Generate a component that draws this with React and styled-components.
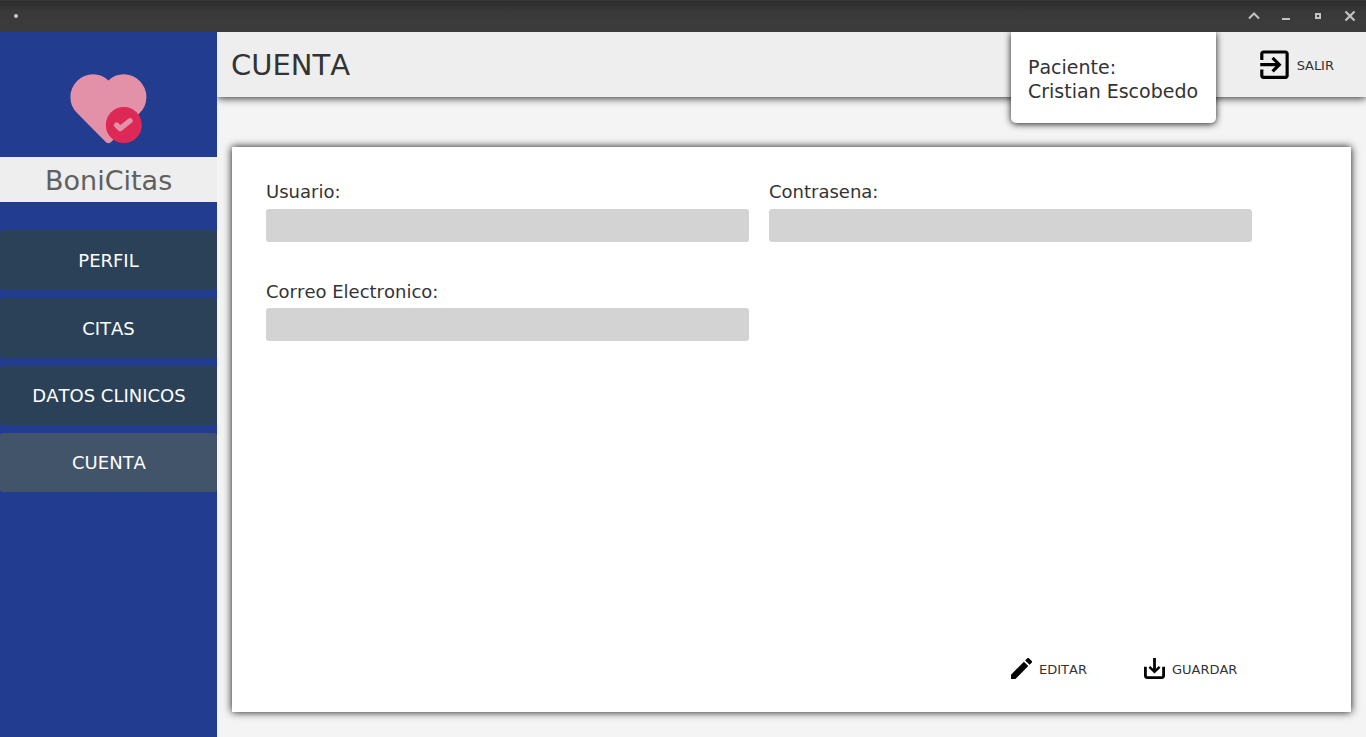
import React from "react";
import styled, { createGlobalStyle } from "styled-components";

const GlobalStyle = createGlobalStyle`
  *, *::before, *::after { box-sizing: border-box; }
  body {
    margin: 0;
    overflow: hidden;
    font-family: "DejaVu Sans", sans-serif;
    color: #333;
    background: #f4f4f4;
  }
  body, button { font-kerning: none; }
`;

const Window = styled.div`
  display: flex;
  flex-direction: column;
  height: 737px;
`;

const TitleBar = styled.div`
  display: flex;
  align-items: center;
  justify-content: space-between;
  flex: none;
  height: 32px;
  padding: 0 10px 0 14px;
  background: linear-gradient(#3f3f3f 0, #2e2e2e 1px, #2e2e2e 3px, #383838 11px, #3b3b3b 20px, #3b3b3b);
  position: relative;
  z-index: 5;
`;

const Dot = styled.span`
  width: 4px;
  height: 4px;
  border-radius: 50%;
  background: #c8c8c8;
`;

const Controls = styled.div`
  display: flex;
  gap: 20px;
  svg { display: block; }
`;

const Body = styled.div`
  display: flex;
  flex: 1;
  min-height: 0;
`;

const Sidebar = styled.aside`
  flex: none;
  width: 217px;
  background: #223c8f;
`;

const LogoArea = styled.div`
  height: 125px;
  padding: 37px 0 0 65px;
  svg { display: block; }
`;

const Brand = styled.div`
  height: 45px;
  padding-left: 45px;
  background: #eee;
  color: #606060;
  font-size: 27px;
  line-height: 47px;
`;

const Nav = styled.nav`
  display: flex;
  flex-direction: column;
  gap: 8px;
  padding-top: 28px;
`;

const NavButton = styled.button`
  height: ${(p) => (p.$compact ? 59 : 60)}px;
  padding: ${(p) => (p.$compact ? "0 0 1px 1px" : "1px 0 0")};
  border: 0;
  border-radius: 3px;
  background: ${(p) => (p.$active ? "#425469" : "#2b4157")};
  color: #fff;
  font-family: "DejaVu Sans", sans-serif;
  font-size: 18px;
`;

const Main = styled.main`
  flex: 1;
  display: flex;
  flex-direction: column;
  min-width: 0;
`;

const Header = styled.header`
  position: relative;
  display: flex;
  align-items: center;
  justify-content: space-between;
  flex: none;
  height: 65px;
  padding: 0 32px 0 14px;
  background: #eee;
  box-shadow: 0 1px 8px rgba(0, 0, 0, 0.85);
  clip-path: inset(0 0 -40px 0);
`;

const Title = styled.h1`
  margin: 0;
  font-size: 29px;
  font-weight: 400;
  line-height: 34px;
`;

const Patient = styled.div`
  position: absolute;
  top: 0;
  right: 150px;
  width: 205px;
  height: 91px;
  padding: 23px 0 0 17px;
  background: #fff;
  border-radius: 0 0 5px 5px;
  box-shadow: 0 1px 7px rgba(0, 0, 0, 0.9);
  font-size: 19px;
  line-height: 24px;
  white-space: nowrap;
`;

const Action = styled.button`
  display: flex;
  align-items: center;
  gap: ${(p) => p.$gap}px;
  padding: 0;
  border: 0;
  background: none;
  color: #333;
  font-family: "DejaVu Sans", sans-serif;
  font-size: 13px;
  svg { display: block; flex: none; }
`;

const ActionLabel = styled.span`
  padding-top: 2px;
`;

const Card = styled.section`
  flex: 1;
  display: flex;
  flex-direction: column;
  justify-content: space-between;
  margin: 50px 15px 25px;
  padding: 34px 99px 33px 34px;
  background: #fff;
  box-shadow: 0 0 8px rgba(0, 0, 0, 0.95);
`;

const Fields = styled.div`
  display: grid;
  grid-template-columns: 483px 483px;
  column-gap: 20px;
  row-gap: 39px;
`;

const Field = styled.label`
  display: block;
  font-size: 18px;
  line-height: 21px;
`;

const Input = styled.input`
  display: block;
  width: 100%;
  height: 33px;
  margin-top: ${(p) => p.$space}px;
  border: 0;
  border-radius: 3px;
  background: #d3d3d3;
`;

const Actions = styled.div`
  display: flex;
  justify-content: flex-end;
  gap: 57px;
  padding-right: 14.6px;
`;

const HeartLogo = () => (
  <svg width="90" height="80" viewBox="65 69 90 80">
    <path d="M77.05 113.05A22.7 22.7 0 0 1 70.4 97A22.7 22.7 0 0 1 93.1 74.3A22.7 22.7 0 0 1 108.4 80.4A22.7 22.7 0 0 1 123.7 74.3A22.7 22.7 0 0 1 146.4 97A22.7 22.7 0 0 1 139.75 113.05L110.8 142.3Q108.4 144.3 106 142.3Z" fill="#e391a9" />
    <circle cx="123.8" cy="125" r="18" fill="#de2855" />
    <circle cx="123.8" cy="125" r="12.3" fill="none" stroke="#b92b62" strokeWidth=".5" strokeDasharray="1 1" />
    <path d="M116.6 125.1L120.2 128.6L130 120.8" fill="none" stroke="#e391a9" strokeWidth="5.3" strokeLinecap="round" strokeLinejoin="round" />
  </svg>
);

const ExitIcon = () => (
  <svg width="38" height="38" viewBox="-0.3 0.2 24 24">
    <path d="M10.09 15.59L11.5 17l5-5-5-5-1.41 1.41L12.67 11H3v2h9.67l-2.58 2.59zM19 3H5c-1.11 0-2 .9-2 2v4h2V5h14v14H5v-4H3v4c0 1.1.89 2 2 2h14c1.1 0 2-.9 2-2V5c0-1.1-.9-2-2-2z" />
  </svg>
);

const EditIcon = () => (
  <svg width="21" height="21" viewBox="3 3 18 18">
    <path d="M3 17.25V21h3.75L17.81 9.94l-3.75-3.75L3 17.25zM20.71 7.04c.39-.39.39-1.02 0-1.41l-2.34-2.34c-.39-.39-1.02-.39-1.41 0l-1.83 1.83 3.75 3.75 1.83-1.83z" />
  </svg>
);

const SaveIcon = () => (
  <svg width="21" height="21" viewBox="0 0 21 21" fill="none" stroke="#000" strokeWidth="2.8">
    <path d="M1.4 8.8V17.6Q1.4 19.6 3.4 19.6H17.6Q19.6 19.6 19.6 17.6V8.8" />
    <path d="M10.5 0V13" />
    <path d="M5.4 8.8L10.5 13.8L15.6 8.8" strokeWidth="2.5" />
  </svg>
);

const WindowIcons = () => (
  <Controls>
    <svg width="12" height="12" viewBox="0 0 12 12"><path d="M1 8.5L6 3.5L11 8.5" fill="none" stroke="#c3c3c3" strokeWidth="2" /></svg>
    <svg width="12" height="12" viewBox="0 0 12 12"><path d="M2 8h8v2H2z" fill="#c3c3c3" /></svg>
    <svg width="12" height="12" viewBox="0 0 12 12"><path d="M4 4h4v4H4z" fill="none" stroke="#c3c3c3" strokeWidth="2" /></svg>
    <svg width="12" height="12" viewBox="0 0 12 12"><path d="M1.5 1.5L10.5 10.5M10.5 1.5L1.5 10.5" stroke="#c3c3c3" strokeWidth="2.2" /></svg>
  </Controls>
);

export default function App() {
  return (
    <>
      <GlobalStyle />
      <Window>
        <TitleBar>
          <Dot />
          <WindowIcons />
        </TitleBar>
        <Body>
          <Sidebar>
            <LogoArea><HeartLogo /></LogoArea>
            <Brand>BoniCitas</Brand>
            <Nav>
              <NavButton>PERFIL</NavButton>
              <NavButton>CITAS</NavButton>
              <NavButton $compact>DATOS CLINICOS</NavButton>
              <NavButton $compact $active>CUENTA</NavButton>
            </Nav>
          </Sidebar>
          <Main>
            <Header>
              <Title>CUENTA</Title>
              <Patient>Paciente:<br />Cristian Escobedo</Patient>
              <Action $gap={4}><ExitIcon /><ActionLabel>SALIR</ActionLabel></Action>
            </Header>
            <Card>
              <Fields>
                <Field>Usuario:<Input $space={7} /></Field>
                <Field>Contrasena:<Input type="password" $space={7} /></Field>
                <Field>Correo Electronico:<Input $space={6} /></Field>
              </Fields>
              <Actions>
                <Action $gap={7}><EditIcon /><ActionLabel>EDITAR</ActionLabel></Action>
                <Action $gap={7}><SaveIcon /><ActionLabel>GUARDAR</ActionLabel></Action>
              </Actions>
            </Card>
          </Main>
        </Body>
      </Window>
    </>
  );
}
